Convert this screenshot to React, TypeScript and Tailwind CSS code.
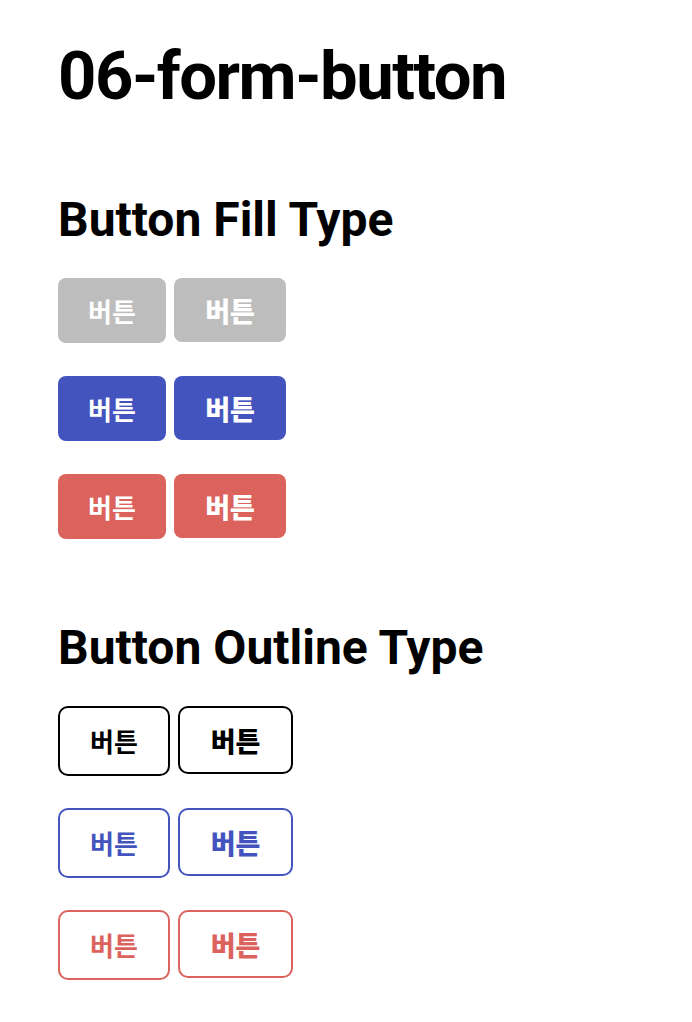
import React from "react";

const fillRows = [
    "bg-[#bdbdbd]",
    "bg-[#4454be]",
    "bg-[#dc625d]",
];

const outlineRows = [
    "border-black text-black",
    "border-[#4454be] text-[#4454be]",
    "border-[#dc625d] text-[#dc625d]",
];

const korean = { fontFamily: '"Noto Sans CJK KR", "Noto Sans", sans-serif' };

function FillRow({ color }: { color: string }) {
    return (
        <div className="flex items-start gap-2">
            <button
                className={`w-[108px] h-[65px] rounded-lg text-white text-[26px] font-bold leading-none flex items-center justify-center ${color}`}
                style={korean}
            >
                버튼
            </button>
            <button
                className={`w-[112px] h-[64px] rounded-lg text-white text-[27px] font-black leading-none flex items-center justify-center ${color}`}
                style={korean}
            >
                버튼
            </button>
        </div>
    );
}

function OutlineRow({ color }: { color: string }) {
    return (
        <div className="flex items-start gap-2">
            <button
                className={`w-[112px] h-[70px] rounded-[10px] border-2 bg-white text-[26px] font-bold leading-none flex items-center justify-center ${color}`}
                style={korean}
            >
                버튼
            </button>
            <button
                className={`w-[115px] h-[68px] rounded-[10px] border-2 bg-white text-[27px] font-black leading-none flex items-center justify-center ${color}`}
                style={korean}
            >
                버튼
            </button>
        </div>
    );
}

export default function App() {
    return (
        <div
            className="min-h-screen bg-white text-black px-[58px] pt-[43px] pb-10"
            style={{ fontFamily: 'Roboto, "Noto Sans CJK KR", sans-serif' }}
        >
            <h1 className="text-[67px] font-bold leading-none tracking-[-1.5px]">06-form-button</h1>

            {/* Fill type */}
            <h2 className="mt-[86px] text-[48px] font-bold leading-none">Button Fill Type</h2>
            <div className="mt-[34px] flex flex-col gap-[33px]">
                {fillRows.map((c) => (
                    <FillRow key={c} color={c} />
                ))}
            </div>

            {/* Outline type */}
            <h2 className="mt-[85px] text-[48px] font-bold leading-none">Button Outline Type</h2>
            <div className="mt-[34px] flex flex-col gap-[32px]">
                {outlineRows.map((c) => (
                    <OutlineRow key={c} color={c} />
                ))}
            </div>
        </div>
    );
}
